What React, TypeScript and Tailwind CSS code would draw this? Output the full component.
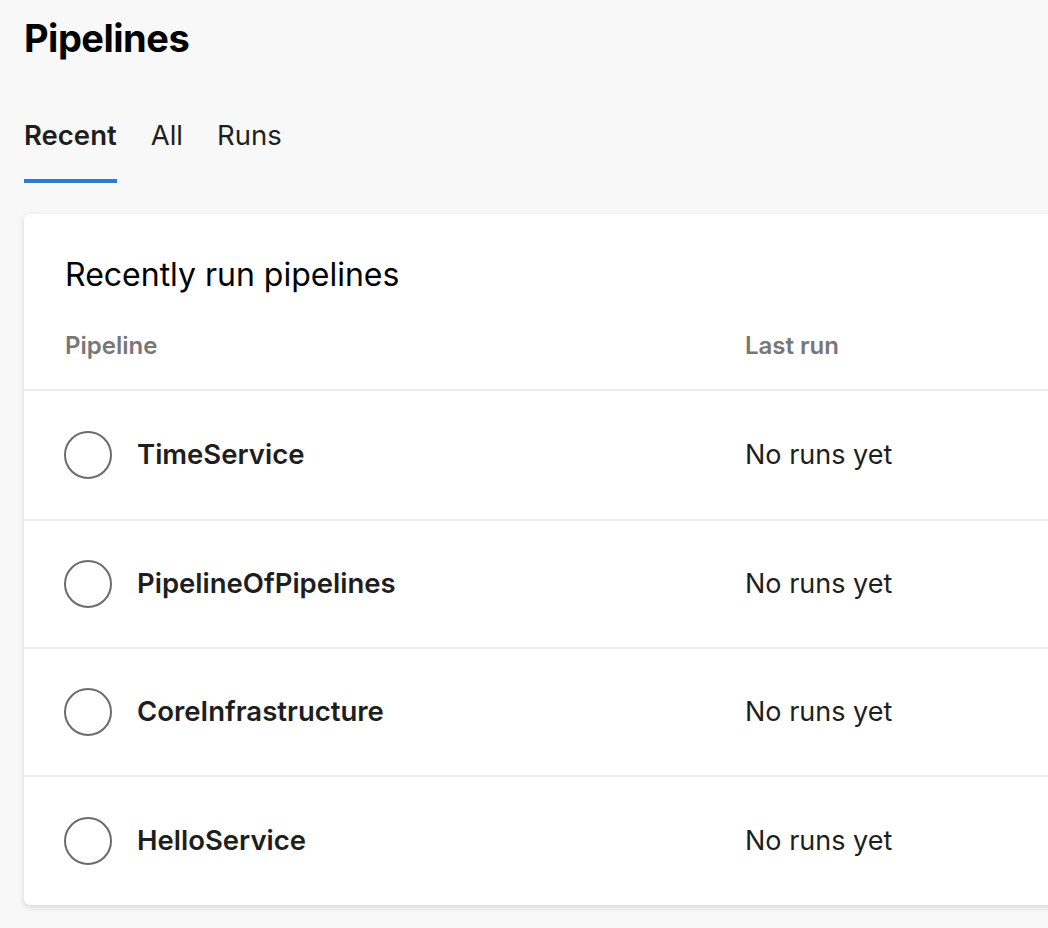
import React from "react";

const rows = ["TimeService", "PipelineOfPipelines", "CoreInfrastructure", "HelloService"];

export default function App() {
  return (
    <div
      className="min-h-[928px] w-[1048px] overflow-hidden bg-[#f8f8f8] text-[#1e1e1e]"
      style={{ fontFamily: "Inter, 'Noto Sans', sans-serif" }}
    >
      <div className="pl-[24px] pt-[14px]">
        <h1 className="text-[38px] font-bold leading-[48px] tracking-[-0.5px] text-black">Pipelines</h1>
        <div className="mt-[56px] flex gap-[34px] text-[27.5px] leading-[34px]">
          <div className="flex flex-col">
            <span className="font-semibold">Recent</span>
            <span className="mt-[27px] h-[4px] w-full bg-[#2f7ad3]" />
          </div>
          <span>All</span>
          <span>Runs</span>
        </div>
      </div>
      <div className="ml-[24px] mt-[31px] w-[1100px] rounded-[6px] bg-white shadow-[0_2px_6px_rgba(0,0,0,0.14)]">
        <div className="px-[41px] pt-[41px] text-[32px] leading-[40px] text-black">Recently run pipelines</div>
        <div className="flex h-[96px] items-center border-b-2 border-[#ebebeb] pt-[8px] pl-[41px] text-[24px] font-semibold text-[#777]">
          <span className="w-[680px]">Pipeline</span>
          <span>Last run</span>
        </div>
        {rows.map((r, i) => (
          <div
            key={r}
            className={`flex items-center pl-[40px] text-[27px] ${i === 0 ? "h-[130px]" : "h-[128px]"} ${i < rows.length - 1 ? "border-b-2 border-[#ebebeb]" : ""}`}
          >
            <div className="flex w-[681px] items-center">
              <span className="h-[48px] w-[48px] rounded-full border-[2.5px] border-[#6b6b6b]" />
              <span className="ml-[25px] text-[27.5px] font-semibold">{r}</span>
            </div>
            <span>No runs yet</span>
          </div>
        ))}
      </div>
    </div>
  );
}
